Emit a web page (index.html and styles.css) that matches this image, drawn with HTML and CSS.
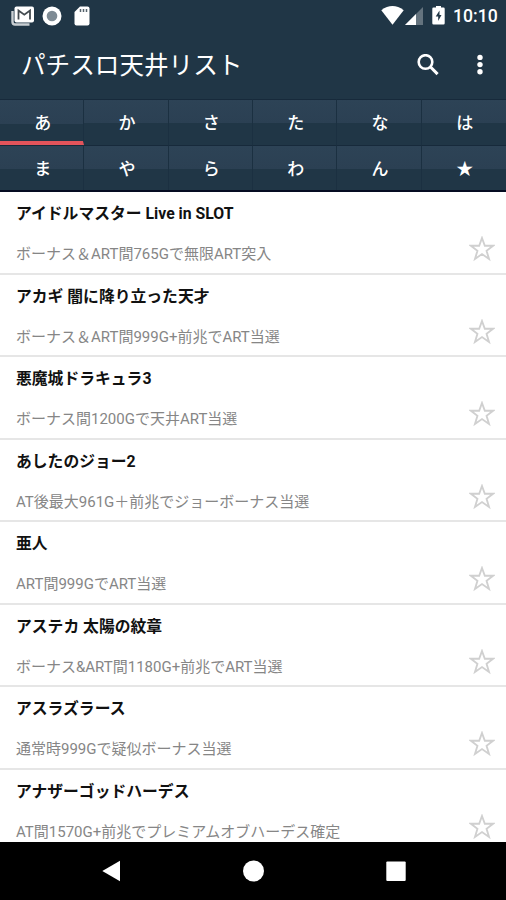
FILE: index.html
```
<!DOCTYPE html>
<html lang="ja">

<head>
    <meta charset="UTF-8">
    <meta name="viewport" content="width=device-width, initial-scale=1.0">
    <title>パチスロ天井リスト</title>
    <link rel="stylesheet" href="styles.css">
</head>

<body>
    <svg class="defs">
        <symbol id="star" viewBox="0 0 24 24">
            <path d="M12 1.800L14.600 9H22.200L16.200 13.600L18.500 21.200L12 16.700L5.500 21.200L7.800 13.600L1.800 9H9.400z" fill="none" stroke="#d0d0d0" stroke-width="1.700"/>
        </symbol>
    </svg>

    <header>
        <div class="status">
            <svg class="mail" width="24" height="20" viewBox="0 0 24 20">
                <path d="M1.500 5v11q0 2.500 2.500 2.500h14.500" fill="none" stroke="#c9cfd3" stroke-width="2.400"/>
                <rect x="3.500" y="0.500" width="19.500" height="16" rx="2" fill="#fff"/>
                <path d="M7.500 13.500V4.500l5.800 4.200L19 4.500v9" fill="none" stroke="#444b50" stroke-width="1.800"/>
            </svg>
            <svg class="disc" width="20" height="20" viewBox="0 0 20 20">
                <circle cx="10" cy="10" r="9.500" fill="#fff"/>
                <circle cx="10" cy="10" r="5.300" fill="#7e8b94"/>
            </svg>
            <svg class="sd" width="16" height="20" viewBox="0 0 16 20">
                <path d="M6 .5h7.500q2 0 2 2v15q0 2-2 2h-11q-2 0-2-2V6z" fill="#fff"/>
                <path d="M6.500 3v3M9.500 3v3M12.500 3v3" stroke="#56636c" stroke-width="1.500"/>
            </svg>
            <span class="space"></span>
            <svg class="wifi" width="23" height="19" viewBox="0 0 23 19">
                <path d="M.3 4.200Q11.500-4 22.700 4.200L11.500 18.700z" fill="#fff"/>
            </svg>
            <svg class="signal" width="18" height="18" viewBox="0 0 18 18">
                <path d="M18 0v18H0z" fill="#64737e"/>
                <path d="M11 7v11H0z" fill="#fff"/>
            </svg>
            <svg class="battery" width="13" height="19" viewBox="0 0 13 19">
                <path d="M4 0h5v1.500h2.500q1.200 0 1.200 1.200v14.500q0 1.300-1.200 1.300h-10Q.3 18.500.3 17.200V2.700Q.3 1.500 1.500 1.500H4z" fill="#fff"/>
                <path d="M7.500 4.500L3.700 10.500h2.500v4.500L9.500 9H7.500z" fill="#203646"/>
            </svg>
            <span class="time">10:10</span>
        </div>
        <div class="appbar">
            <h1>パチスロ天井リスト</h1>
            <svg class="search" width="22" height="22" viewBox="0 0 22 22">
                <circle cx="8.500" cy="8" r="6.800" fill="none" stroke="#fff" stroke-width="2.600"/>
                <path d="M13.300 12.800l7.300 7.300" stroke="#fff" stroke-width="3"/>
            </svg>
            <svg class="more" width="6" height="22" viewBox="0 0 6 22">
                <circle cx="3" cy="3.400" r="2.700"/>
                <circle cx="3" cy="10.600" r="2.700"/>
                <circle cx="3" cy="17.800" r="2.700"/>
            </svg>
        </div>
    </header>

    <nav class="tabs">
        <a class="active">あ</a><a>か</a><a>さ</a><a>た</a><a>な</a><a>は</a>
        <a>ま</a><a>や</a><a>ら</a><a>わ</a><a>ん</a><a>★</a>
    </nav>

    <ul class="list">
        <li>
            <h2>アイドルマスター Live in SLOT</h2>
            <p>ボーナス＆ART間765Gで無限ART突入</p>
            <svg class="star"><use href="#star"/></svg>
        </li>
        <li>
            <h2>アカギ 闇に降り立った天才</h2>
            <p>ボーナス＆ART間999G+前兆でART当選</p>
            <svg class="star"><use href="#star"/></svg>
        </li>
        <li>
            <h2>悪魔城ドラキュラ3</h2>
            <p>ボーナス間1200Gで天井ART当選</p>
            <svg class="star"><use href="#star"/></svg>
        </li>
        <li>
            <h2>あしたのジョー2</h2>
            <p>AT後最大961G＋前兆でジョーボーナス当選</p>
            <svg class="star"><use href="#star"/></svg>
        </li>
        <li>
            <h2>亜人</h2>
            <p>ART間999GでART当選</p>
            <svg class="star"><use href="#star"/></svg>
        </li>
        <li>
            <h2>アステカ 太陽の紋章</h2>
            <p>ボーナス&amp;ART間1180G+前兆でART当選</p>
            <svg class="star"><use href="#star"/></svg>
        </li>
        <li>
            <h2>アスラズラース</h2>
            <p>通常時999Gで疑似ボーナス当選</p>
            <svg class="star"><use href="#star"/></svg>
        </li>
        <li>
            <h2>アナザーゴッドハーデス</h2>
            <p>AT間1570G+前兆でプレミアムオブハーデス確定</p>
            <svg class="star"><use href="#star"/></svg>
        </li>
    </ul>

    <footer>
        <svg width="20" height="22" viewBox="0 0 20 22"><path d="M19 .8v20.400L1.300 11z"/></svg>
        <svg width="22" height="22" viewBox="0 0 22 22"><circle cx="10.500" cy="11" r="10.500"/></svg>
        <svg width="20" height="20" viewBox="0 0 20 20"><rect x=".3" y=".5" width="19.400" height="19.400" rx="1"/></svg>
    </footer>
</body>

</html>
```
FILE: styles.css
```
* {
    box-sizing: border-box;
    margin: 0;
    padding: 0;
}

body {
    display: flex;
    flex-direction: column;
    height: 900px;
    overflow: hidden;
    background-color: #fff;
    font-family: Roboto, "Noto Sans CJK JP", sans-serif;
}

svg {
    display: block;
    flex: none;
}

.defs {
    display: none;
}

header {
    flex: none;
    height: 99px;
    background-color: #203646;
    color: #fff;
}

.status {
    display: flex;
    align-items: center;
    height: 31px;
    padding: 0 8px 0 11px;
}

.disc {
    margin-left: 7px;
}

.sd {
    margin-left: 12px;
}

.space {
    flex: 1;
}

.signal {
    margin-left: 1px;
}

.battery {
    margin-left: 9px;
}

.time {
    width: 45px;
    margin-left: 8px;
    font-size: 17.600px;
    font-weight: 500;
    line-height: 32px;
    white-space: nowrap;
}

.appbar {
    display: flex;
    align-items: center;
    height: 68px;
    padding: 0 23px 0 21px;
}

.appbar h1 {
    flex: 1;
    font-size: 24.600px;
    font-weight: 400;
    line-height: 68px;
    padding-top: 2px;
}

.search {
    margin-right: 1px;
}

.more {
    margin-left: 37px;
    fill: #fff;
}

.tabs {
    display: grid;
    flex: none;
    grid-template-columns: repeat(6, 1fr);
    grid-template-rows: 46px 45px;
    height: 93px;
    border-bottom: 2px solid #050c22;
}

.tabs a {
    border-top: 1px solid #172a3b;
    border-right: 1px solid #1b3041;
    background: linear-gradient(#2d4356 0, #2b4053 52%, #203646 52%, #203646 100%);
    color: #fff;
    font-size: 17px;
    font-weight: 500;
    line-height: 46px;
    padding-left: 2px;
    text-align: center;
}

.tabs a:nth-child(6n) {
    border-right: 0;
}

.tabs .active {
    border-bottom: 4px solid #e3545b;
    background-size: 100% 46px;
}

.list {
    flex: none;
    height: 650px;
    overflow: hidden;
    list-style: none;
}

.list li {
    display: grid;
    grid-template-columns: 1fr 26px;
    grid-template-rows: 42px 37.500px;
    height: 82.500px;
    padding: 1px 11px 0 16px;
    border-bottom: 2px solid #e6e6e6;
}

.list h2 {
    grid-column: 1 / 3;
    color: #111;
    font-size: 15.800px;
    font-weight: 700;
    line-height: 42px;
}

.list p {
    color: #868686;
    font-size: 15px;
    line-height: 39px;
    white-space: nowrap;
}

.star {
    width: 26px;
    height: 26px;
    margin-top: 1px;
}

footer {
    display: flex;
    flex: 1;
    align-items: center;
    justify-content: space-between;
    padding: 0 100px 0 101px;
    background-color: #000;
    fill: #fff;
}
```
